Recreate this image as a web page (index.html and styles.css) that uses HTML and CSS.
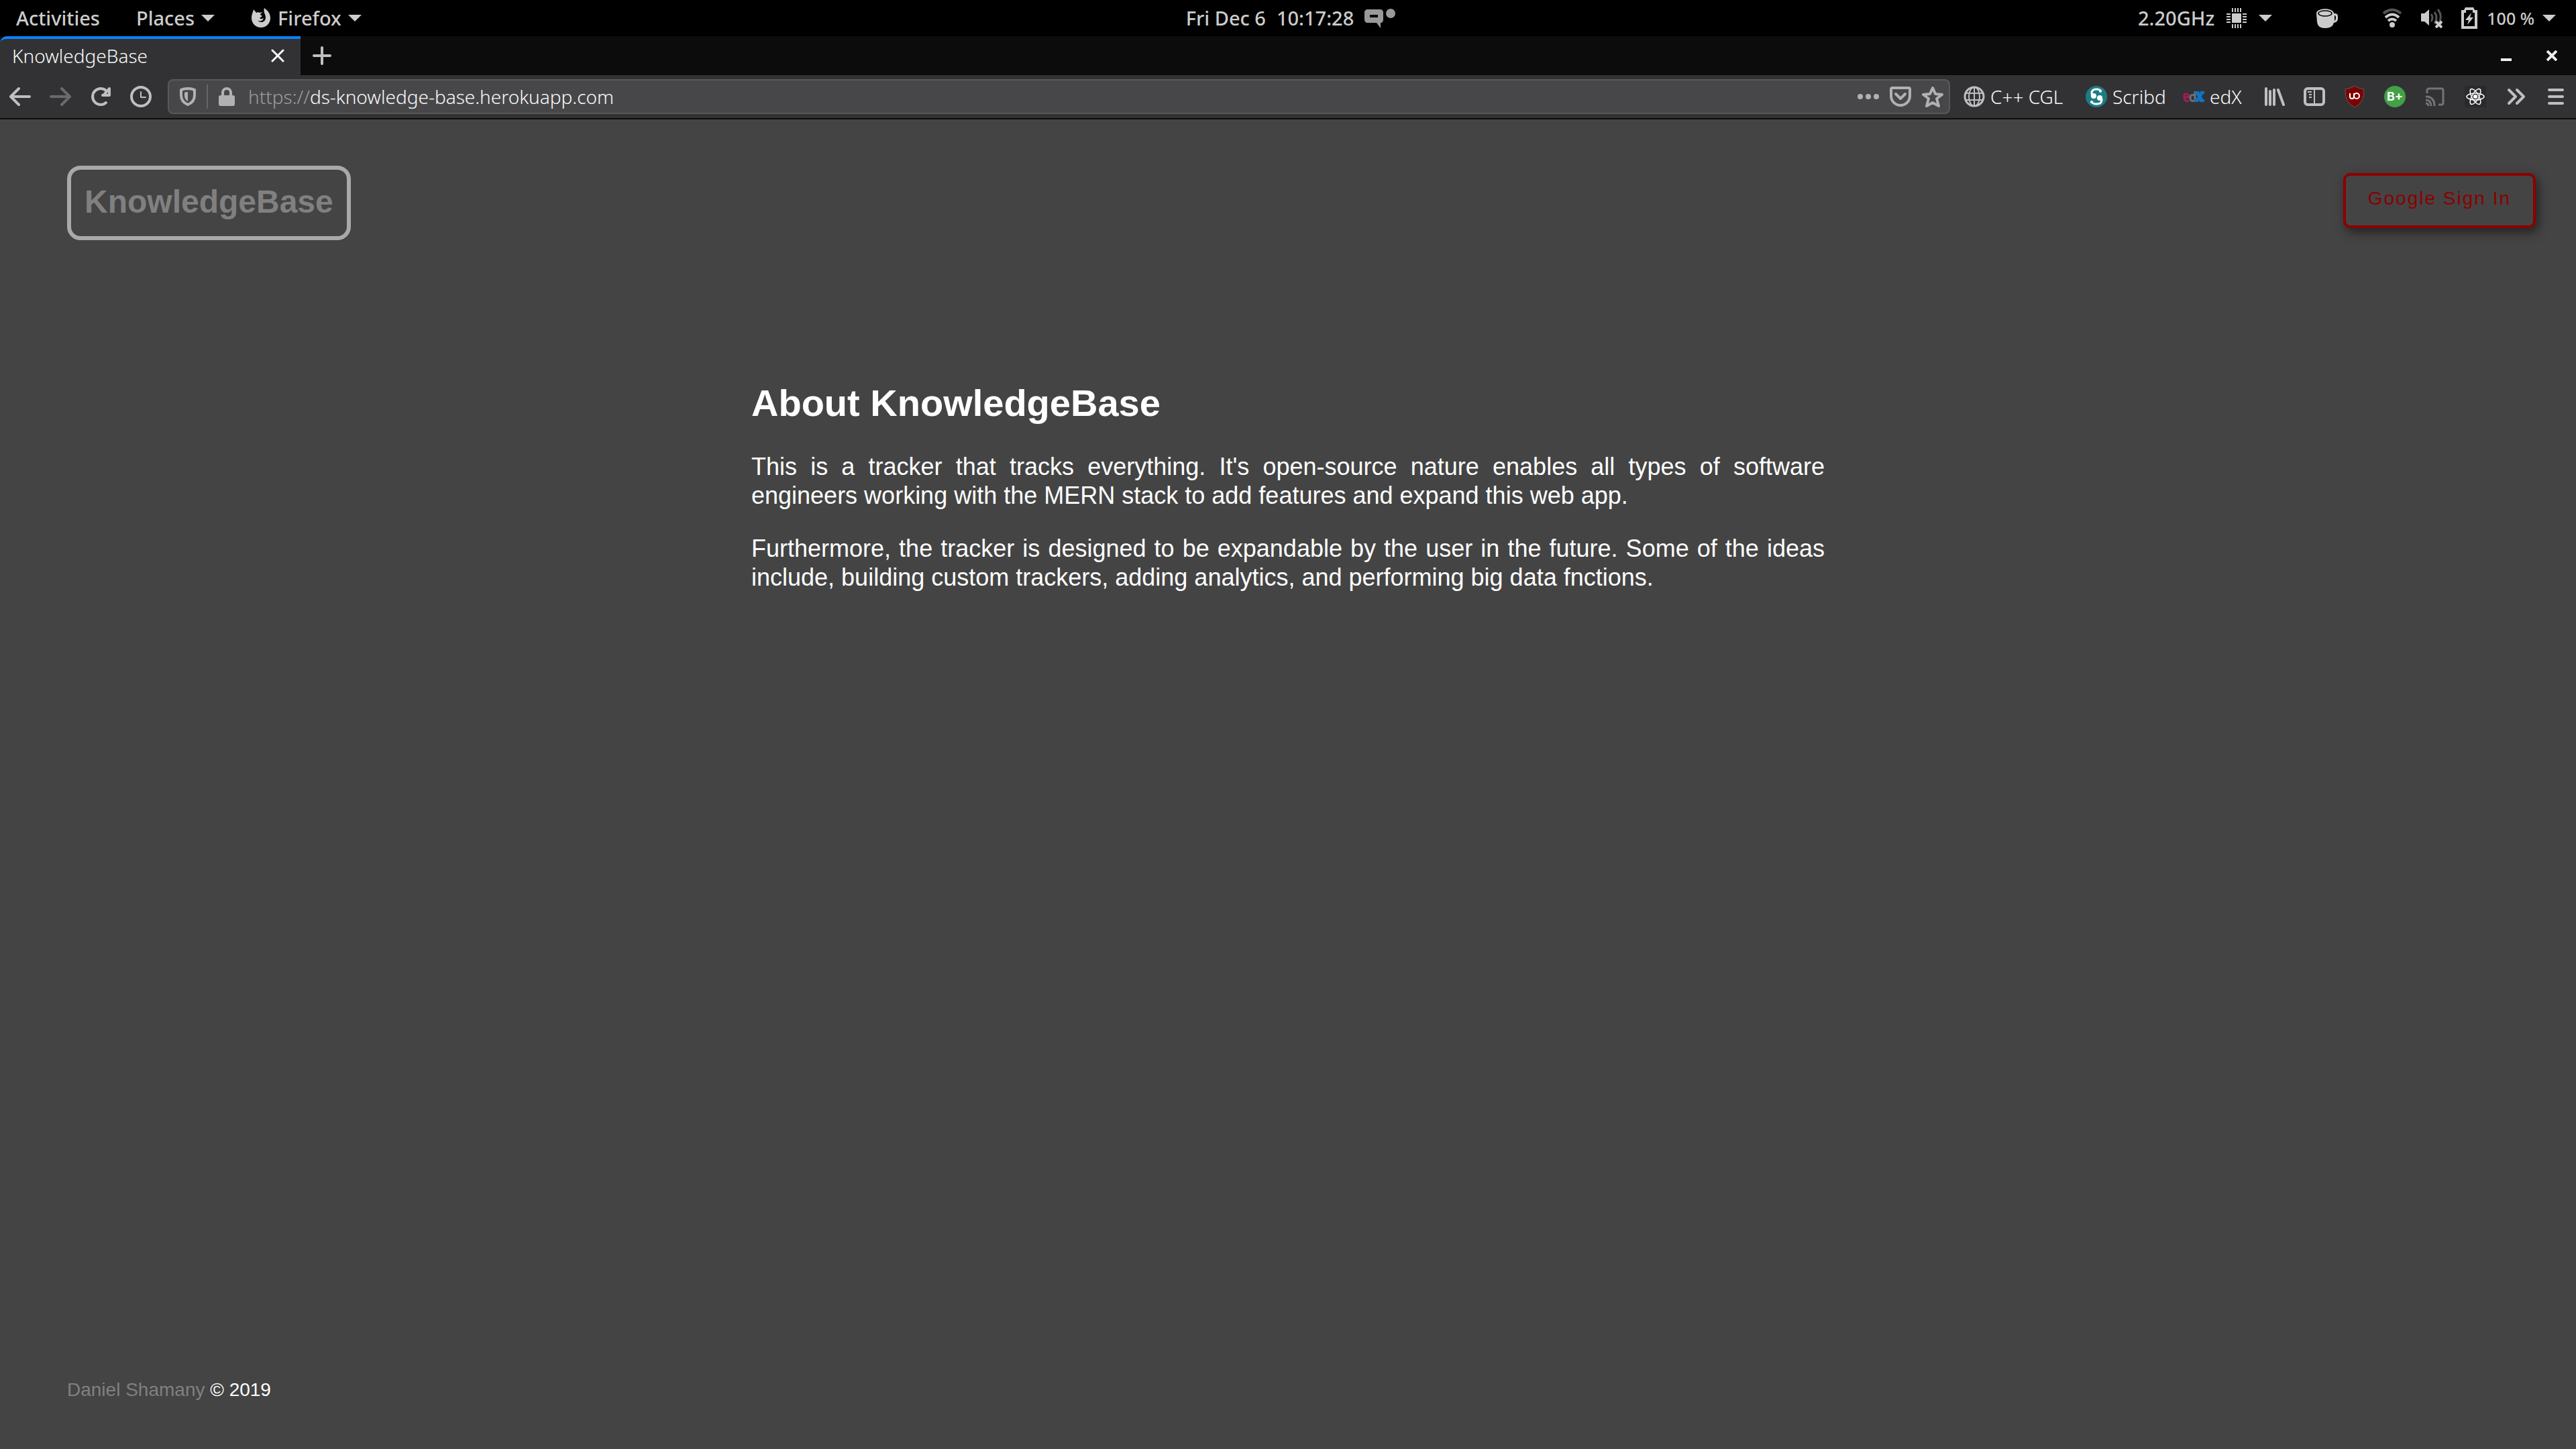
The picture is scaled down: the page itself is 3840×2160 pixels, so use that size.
FILE: index.html
```html
<!DOCTYPE html>
<html lang="en">
<head>
<meta charset="utf-8">
<title>KnowledgeBase</title>
<link rel="stylesheet" href="styles.css">
</head>
<body>
<div class="topbar">
  <div class="topbar-left">
    <button class="panel-btn activities">Activities</button>
    <button class="panel-btn places">Places <svg class="caret" width="20" height="10" viewBox="0 0 20 10"><path d="M0 0h20L10 10z"/></svg></button>
    <button class="panel-btn app-menu"><svg width="30" height="30" viewBox="0 0 30 30"><path d="M4 2l4 5c2-1 4-1 5 0l4-1c-1 2-3 2-3 4l3 2-4 3c2 2 4 1 6 0-1 4-5 6-9 3 3 5 12 4 12-4 0-5-4-8-2-14 4 3 9 7 9 15a14 14 0 0 1-28 0C1 9 3 7 4 2z"/></svg>Firefox <svg class="caret" width="20" height="10" viewBox="0 0 20 10"><path d="M0 0h20L10 10z"/></svg></button>
  </div>
  <button class="panel-btn clock"><span>Fri Dec 6</span><span>10:17:28</span><svg class="notice" width="48" height="30" viewBox="0 0 48 30"><path fill-rule="evenodd" d="M5 2h18q5 0 5 5v10q0 5-4 5v8l-6-8H5q-5 0-5-5V7q0-5 5-5zm3 8v4h12v-4z"/><circle cx="39" cy="8" r="7"/></svg></button>
  <div class="topbar-right">
    <button class="panel-btn cpu">2.20GHz <svg width="30" height="30" viewBox="0 0 30 30"><path d="M8 8h14v14H8zM8 0h2v6H8zM12 0h2v6h-2zM16 0h2v6h-2zM20 0h2v6h-2zM8 24h2v6H8zM12 24h2v6h-2zM16 24h2v6h-2zM20 24h2v6h-2zM0 8h6v2H0zM0 12h6v2H0zM0 16h6v2H0zM0 20h6v2H0zM24 8h6v2h-6zM24 12h6v2h-6zM24 16h6v2h-6zM24 20h6v2h-6z"/></svg><svg class="caret" width="20" height="10" viewBox="0 0 20 10"><path d="M0 0h20L10 10z"/></svg></button>
    <button class="panel-btn mug" aria-label="Caffeine"><svg width="32" height="30" viewBox="0 0 32 30"><path d="M0 8C0-1 26-1 26 8h1q5 0 5 4v4q0 5-6 6-2 8-13 8Q2 30 1 21z"/><ellipse cx="13" cy="8" rx="10" ry="4" fill="none" stroke="#000" stroke-width="1.5"/><path d="M27 11q2 0 2 3 0 4-2 5z" fill="#000"/></svg></button>
    <button class="panel-btn system"><svg width="30" height="30" viewBox="0 0 30 30"><path d="M2 8Q15-3 28 8" fill="none" stroke="#555" stroke-width="4"/><path d="M5 14q10-9 20 0M9 19q6-5 12 0" fill="none" stroke="#ccc" stroke-width="4"/><circle cx="15" cy="25" r="4"/></svg><svg width="32" height="30" viewBox="0 0 32 30"><path d="M0 8h5l7-6v24l-7-6H0z"/><path d="M15 9q4 5 0 11M20 6q6 8 0 17M25 2q8 10 1 22" fill="none" stroke="#555" stroke-width="3"/><path d="M22 20l9 9M31 20l-9 9" stroke="#ccc" stroke-width="4"/></svg><svg width="24" height="32" viewBox="0 0 24 32"><path fill-rule="evenodd" d="M6 0h12l2 4h4v28H0V4h4zM4 8v20h16V8h-3V4H7v4z"/><path d="M15 8L6 19h5l-2 7 9-11h-5z"/></svg><span class="percent">100 %</span><svg class="caret" width="20" height="10" viewBox="0 0 20 10"><path d="M0 0h20L10 10z"/></svg></button>
  </div>
</div>

<div class="tabbar">
  <div class="tab"><span>KnowledgeBase</span><button class="icon-btn" aria-label="Close tab"><svg width="20" height="20" viewBox="0 0 20 20"><path class="line bright" d="M2 2l16 16M18 2L2 18"/></svg></button></div>
  <button class="icon-btn new-tab" aria-label="New tab"><svg width="28" height="28" viewBox="0 0 28 28"><path class="line" d="M14 2v24M2 14h24"/></svg></button>
  <div class="window-controls">
    <button class="icon-btn" aria-label="Minimize"><svg width="16" height="16" viewBox="0 0 16 16"><path d="M0 12h16v4H0z" fill="#eee"/></svg></button>
    <button class="icon-btn" aria-label="Close window"><svg width="16" height="16" viewBox="0 0 16 16"><path d="M1 1l14 14M15 1L1 15" stroke="#eee" stroke-width="4"/></svg></button>
  </div>
</div>

<div class="navbar">
  <div class="icons">
    <button class="icon-btn" aria-label="Back"><svg width="32" height="32" viewBox="0 0 32 32"><path class="line" d="M30 16H3M14 4L2 16l12 12"/></svg></button>
    <button class="icon-btn dim" aria-label="Forward"><svg width="32" height="32" viewBox="0 0 32 32"><path class="line" d="M2 16h27M18 4l12 12-12 12"/></svg></button>
    <button class="icon-btn" aria-label="Reload"><svg width="32" height="32" viewBox="0 0 32 32"><path class="line" d="M24 25a12 12 0 1 1 1-17M29 4v10H19M29 4v10l-8-1z"/></svg></button>
    <button class="icon-btn" aria-label="History"><svg width="32" height="32" viewBox="0 0 32 32"><circle class="line" cx="16" cy="16" r="14"/><path class="line thin" d="M16 9v8h7"/></svg></button>
  </div>
  <div class="urlbar">
    <svg width="24" height="28" viewBox="0 0 24 28"><path d="M12 2q6 0 10 2v8q0 10-10 14Q2 22 2 12V4q4-2 10-2z" fill="none" stroke="#b1b1b3" stroke-width="4"/><path d="M12 7v14q-5-3-5-8V8q2-1 5-1z" fill="#b1b1b3"/></svg>
    <span class="divider"></span>
    <svg width="24" height="28" viewBox="0 0 24 28"><path d="M6 14V8a6 6 0 0 1 12 0v6" fill="none" stroke="#b1b1b3" stroke-width="4"/><rect y="12" width="24" height="16" rx="3" fill="#b1b1b3"/></svg>
    <label class="scheme" for="url">https://</label><input id="url" class="url" type="text" value="ds-knowledge-base.herokuapp.com" spellcheck="false">
    <div class="url-actions">
      <button class="icon-btn" aria-label="Page actions"><svg width="32" height="32" viewBox="0 0 32 32"><g fill="#b1b1b3"><circle cx="4" cy="16" r="4"/><circle cx="16" cy="16" r="4"/><circle cx="28" cy="16" r="4"/></g></svg></button>
      <button class="icon-btn" aria-label="Save to Pocket"><svg width="32" height="32" viewBox="0 0 32 32"><path class="line grey" d="M4 3h24q2 0 2 2v10a14 14 0 0 1-28 0V5q0-2 2-2zM9 12l7 7 7-7"/></svg></button>
      <button class="icon-btn" aria-label="Bookmark page"><svg width="32" height="32" viewBox="0 0 32 32"><path class="line grey" d="M16 3l4 9 10 1-8 6 3 11-9-5-9 5 3-11-8-6 10-1z"/></svg></button>
    </div>
  </div>
  <div class="bookmarks">
    <a href="#cgl"><svg width="32" height="32" viewBox="0 0 32 32"><g fill="none" stroke="#bfbfc0" stroke-width="2"><circle cx="16" cy="16" r="14" stroke-width="3"/><ellipse cx="16" cy="16" rx="8" ry="14"/><path d="M16 2v28M3 11h26M3 21h26"/></g></svg>C++ CGL</a>
    <a href="#scribd"><svg width="32" height="32" viewBox="0 0 32 32"><circle cx="16" cy="16" r="16" fill="#1e7b85"/><path d="M23 8q-2-3-7-3-7 0-7 6 0 5 5 5M9 24q2 3 7 3 8 0 8-6 0-5-5-5" fill="none" stroke="#fff" stroke-width="3"/><circle cx="12" cy="15" r="4" fill="#fff"/><circle cx="21" cy="18" r="4" fill="#fff"/><circle cx="22" cy="8" r="2" fill="#fff"/><circle cx="9" cy="24" r="2" fill="#fff"/></svg>Scribd</a>
    <a href="#edx"><svg width="32" height="32" viewBox="0 0 32 32"><path d="M2 17h7q0-5-4-5t-3 5 3 6l4-1" fill="none" stroke="#a3195b" stroke-width="3"/><path d="M18 8v15M17 14q-6-2-6 4t6 4" fill="none" stroke="#707073" stroke-width="3"/><path d="M18 8h6l1 3 1-3h6v4h-2l-2 4 2 4h2v4h-7l-1-3-1 3h-6v-4h2l3-4-3-4h-1z" fill="#0f74c4"/></svg>edX</a>
  </div>
  <div class="icons">
    <button class="icon-btn" aria-label="Library"><svg width="32" height="32" viewBox="0 0 32 32"><path class="line" d="M4 4v24M10 8v20M16 6v22M22 6l8 22"/></svg></button>
    <button class="icon-btn" aria-label="Sidebars"><svg width="32" height="32" viewBox="0 0 32 32"><rect class="line" x="2" y="4" width="28" height="24" rx="4"/><path d="M16 5v22M6 9h6M8 13h4M8 17h4" stroke="#bfbfc0" stroke-width="2"/></svg></button>
    <button class="icon-btn" aria-label="uBlock Origin"><svg width="32" height="32" viewBox="0 0 32 32"><path d="M16 0q6 4 14 5 1 20-14 27Q1 25 2 5q8-1 14-5z" fill="#800000" stroke="#5c5c5e"/><path d="M9 11v5q0 3 3 3t3-3v-5" fill="none" stroke="#fff" stroke-width="2"/><circle cx="19" cy="15" r="4" fill="none" stroke="#fff" stroke-width="2"/></svg></button>
    <button class="icon-btn badge-b">B+</button>
    <button class="icon-btn" aria-label="Cast"><svg width="32" height="32" viewBox="0 0 32 32"><path d="M4 11V7q0-3 3-3h18q3 0 3 3v18q0 3-3 3h-4M2 16q13 0 13 14M2 21q8 0 8 9M2 26q4 0 4 4" fill="none" stroke="#747475" stroke-width="3"/></svg></button>
    <button class="icon-btn" aria-label="React Developer Tools"><svg width="32" height="32" viewBox="0 0 32 32"><rect width="32" height="32" rx="2" fill="#2a2a2c"/><g fill="none" stroke="#fff" stroke-width="1.5"><ellipse cx="16" cy="16" rx="13" ry="5"/><ellipse cx="16" cy="16" rx="13" ry="5" transform="rotate(60 16 16)"/><ellipse cx="16" cy="16" rx="13" ry="5" transform="rotate(120 16 16)"/></g><circle cx="16" cy="16" r="3" fill="#fff"/></svg></button>
    <button class="icon-btn" aria-label="More tools"><svg width="32" height="32" viewBox="0 0 32 32"><path class="line" d="M6 6l10 10L6 26M18 6l10 10-10 10"/></svg></button>
    <button class="icon-btn" aria-label="Menu"><svg width="32" height="32" viewBox="0 0 32 32"><path class="line" d="M6 6h20M6 16h20M6 26h20"/></svg></button>
  </div>
</div>

<div class="page">
  <header class="site-header">
    <a class="logo" href="#home">KnowledgeBase</a>
    <button class="sign-in">Google Sign In</button>
  </header>
  <main class="about">
    <h1>About KnowledgeBase</h1>
    <p>This is a tracker that tracks everything. It's open-source nature enables all types of software engineers working with the MERN stack to add features and expand this web app.</p>
    <p>Furthermore, the tracker is designed to be expandable by the user in the future. Some of the ideas include, building custom trackers, adding analytics, and performing big data fnctions.</p>
  </main>
  <footer class="site-footer"><a href="#author">Daniel Shamany</a> © 2019</footer>
</div>
</body>
</html>
```
FILE: styles.css
```css
* { box-sizing: border-box; }

body {
  margin: 0;
  min-height: 100vh;
  display: flex;
  flex-direction: column;
  background: #444;
  color: #fff;
  font-family: "Liberation Sans", Arial, sans-serif;
}

button {
  margin: 0;
  padding: 0;
  border: 0;
  background: none;
  color: inherit;
  font: inherit;
}

a { color: inherit; text-decoration: none; }
svg { display: block; flex: none; }

/* Desktop panel */
.topbar {
  display: grid;
  grid-template-columns: 1fr auto 1fr;
  align-items: center;
  height: 54px;
  padding: 0 30px 0 24px;
  background: #000;
  color: #ccc;
  font: 500 29px/36px "Noto Sans", sans-serif;
}

.topbar-left, .topbar-right { display: flex; align-items: center; }
.topbar-left { gap: 54px; }
.topbar-right { justify-content: flex-end; gap: 66px; }
.panel-btn { display: flex; align-items: center; gap: 10px; white-space: nowrap; }
.panel-btn svg { fill: currentColor; }
.clock { gap: 16px; padding-left: 16px; }
.clock .notice { fill: #999; }
.cpu { gap: 18px; }
.system { gap: 28px; }
.percent { margin: 0 -16px 0 -14px; font-size: 25px; }

/* Tab strip */
.tabbar {
  display: flex;
  align-items: center;
  height: 58px;
  background: #0c0c0d;
  font: 300 28px/36px "Noto Sans", sans-serif;
}

.tab {
  display: flex;
  align-items: center;
  justify-content: space-between;
  width: 448px;
  height: 58px;
  padding: 0 24px 4px 18px;
  border-top: 4px solid #0a84ff;
  border-top-left-radius: 10px;
  background: #323234;
  color: #f9f9fa;
}

.new-tab { margin-left: 18px; }
.window-controls { display: flex; gap: 52px; margin-left: auto; padding-right: 28px; }

/* Navigation bar */
.navbar {
  display: flex;
  align-items: center;
  height: 66px;
  padding: 0 14px;
  border-bottom: 2px solid #0c0c0d;
  background: #323234;
  color: #f9f9fa;
  font: 300 28px/36px "Noto Sans", sans-serif;
}

.icons { display: flex; gap: 28px; }
.line { fill: none; stroke: #bfbfc0; stroke-width: 4; stroke-linecap: round; stroke-linejoin: round; }
.line.thin { stroke-width: 2; }
.line.bright { stroke: #f9f9fa; stroke-width: 3; }
.line.grey { stroke: #b1b1b3; }
.dim { opacity: .4; }

.urlbar {
  display: flex;
  flex: 1;
  align-items: center;
  gap: 16px;
  height: 52px;
  margin: 0 20px 0 24px;
  padding: 0 8px 0 16px;
  border: 2px solid #59595b;
  border-radius: 8px;
  background: #474749;
}

.divider { width: 2px; height: 36px; background: #5f6670; }
.scheme { margin: 0 -16px 0 4px; color: #9c9c9e; }

.url {
  flex: 1;
  min-width: 0;
  padding: 0;
  border: 0;
  outline: 0;
  background: none;
  color: #f9f9fa;
  font: inherit;
}

.url-actions { display: flex; gap: 16px; }

.bookmarks { display: grid; grid-template-columns: 182px 145px 120px; }
.bookmarks a { display: flex; align-items: center; gap: 8px; white-space: nowrap; }

.badge-b {
  width: 32px;
  height: 32px;
  border-radius: 50%;
  background: #43a047;
  color: #fff;
  font: 700 18px/32px Inter, sans-serif;
}

/* Web page */
.page { display: flex; flex: 1; flex-direction: column; }

.site-header {
  display: flex;
  align-items: flex-start;
  justify-content: space-between;
  padding: 69px 60px 0 100px;
}

.logo {
  padding: 20px 20px 24px;
  border: 6px solid #a9a9a9;
  border-radius: 20px;
  color: #808080;
  font-size: 48px;
  font-weight: 700;
  line-height: 55px;
}

.sign-in {
  margin-top: 11px;
  padding: 18px 33px 24px;
  border: 4px solid #8b0000;
  border-radius: 10px;
  box-shadow: 4px 6px 16px rgba(0, 0, 0, .5);
  color: #8b0000;
  font-size: 28px;
  line-height: 32px;
  letter-spacing: 2px;
}

.about {
  width: 100%;
  max-width: 1600px;
  margin: 211px auto 0;
  font-size: 36px;
  line-height: 43px;
  text-align: justify;
}

.about h1 { margin: 0 0 41px; font-size: 56px; line-height: 64px; }
.about p { margin: 0 0 36px; }

.site-footer {
  margin-top: auto;
  padding: 0 100px 72px;
  font-size: 28px;
  line-height: 32px;
}

.site-footer a { color: #808080; }
```
